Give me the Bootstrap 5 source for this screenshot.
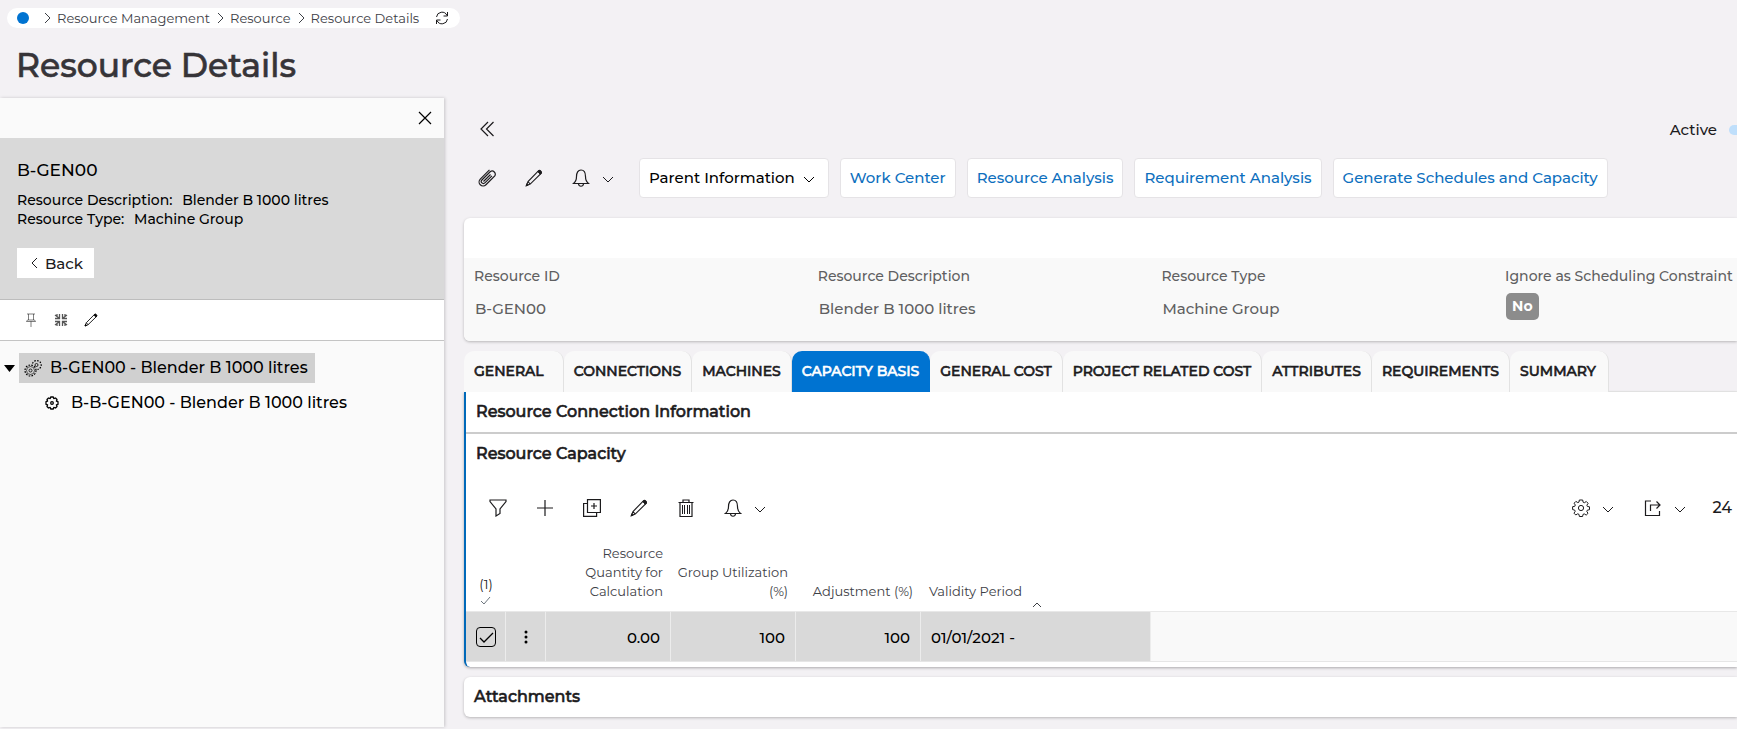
<!DOCTYPE html>
<html lang="en">
<head>
<meta charset="utf-8">
<meta name="viewport" content="width=device-width, initial-scale=1">
<title>Resource Details</title>
<link href="https://cdn.jsdelivr.net/npm/bootstrap@5.3.0/dist/css/bootstrap.min.css" rel="stylesheet">
<style>
body{font-family:Montserrat,Inter,"Open Sans",sans-serif;font-size:15px;font-weight:500;line-height:20px;color:#1c1b1d;background:#f3f1f4;min-height:100vh;overflow-x:hidden}
a{text-decoration:none}
button{font-weight:500}
svg{fill:none;stroke:currentColor;flex:none;display:block}
.ic{width:18px;height:18px}
.ic-sm{width:14px;height:14px}
.chev{width:12px;height:12px}
.iconbtn{border:0;background:none;padding:0;color:inherit;display:flex;align-items:center;justify-content:center}
.heavy{-webkit-text-stroke:.6px currentColor}
.crumbs{height:20px;margin:8px 0 0 7px;padding:0 11px 0 10px;border-radius:10px;font-size:13px;line-height:18px;font-weight:400;width:max-content}
.crumbs a{color:#3d4046}
.crumbs>a{height:19px}
.crumbs .chev{margin:0 4px;color:#3d4046}
.crumbs .dot{width:12px;height:12px;border-radius:50%;background:#0073d1}
.page-title{font-size:33px;line-height:40px;font-weight:500;color:#363438;margin:17px 0 13px 16px}
.side{width:444px;background:#fafafa;box-shadow:1px 0 3px rgba(0,0,0,.18);flex:none;color:#000}
.side-top{height:40px;padding-right:12px}
.side-info{background:#d9d9d9;border-bottom:1px solid #bdbdbd;padding:22px 17px 20px;height:162px}
.side-name{font-size:17px}
.side-desc{font-size:14px;line-height:19px;margin-top:11px}
.side-desc span{margin-left:6px}
.back{background:#fff;height:30px;padding:2px 11px 0 12px;margin-top:19px;color:#1c1b1d}
.side-tools{height:41px;border-bottom:1px solid #c4c4c4;background:#fff;padding-left:24px;gap:16px}
.tree{padding-top:12px;font-size:16px}
.tree-item{height:30px;color:#000}
.picked{background:#d0d0d0;padding:0 7px 0 5px}
.kid{margin:5px 0 0 45px}
.kid svg{stroke-width:2px}
.main{padding:20px 0 10px 20px;min-width:0}
.topbar{padding-left:14px;margin-bottom:18px}
.active-box{margin-right:-28px;padding-top:2px}
.sw{appearance:none;width:36px;height:10px;border-radius:5px;background:#bfdffb;margin:0 0 0 4px}
.tools{gap:11px}
.iconset{padding-left:14px;width:164px;gap:29px}
.act{height:40px;border:1px solid #e5e3e6;border-radius:4px;background:#fff;padding:0 9px;color:#0d6fbe}
.panel-w{background:#fff;border-radius:6px 0 0 6px;box-shadow:0 1px 3px rgba(0,0,0,.25)}
.idcard{margin-top:20px;padding-top:40px}
.fields{display:grid;grid-template-columns:repeat(4,27%);background:#f9f9f9;padding-top:8px;height:83px;overflow:hidden;white-space:nowrap;color:#5f5f61;border-radius:0 0 0 6px}
.fields div{padding-left:10px}
.fields .lab{font-size:14px;line-height:20px;margin-bottom:7px}
.fields dd{margin:0;padding-left:1px;line-height:31px;height:26px}
.flag{background:#8c8c8c;color:#fff;font-weight:700;border-radius:5px;padding:0 6px;height:27px;line-height:27px;display:inline-block;font-size:14px;vertical-align:top}
.tabs{margin-top:10px;border-bottom:1px solid #ebebeb;height:41px}
.tabs button{border:0;border-right:1px solid #e2e2e2;background:#f9f9f9;border-radius:10px 10px 0 0;padding:0 10px 2px;font-size:14px;color:#1c1b1d;height:41px;white-space:nowrap}
.tabs button.active{background:#0073d1;color:#fff;border-color:#0073d1}
.tabs button.first{padding-right:19px}
.tabs button.last{padding-right:12px}
.capacity{background:#fff;border-left:2px solid #0069b9;border-radius:0 0 0 6px;box-shadow:0 1px 3px rgba(0,0,0,.3)}
.sec{font-size:16px;line-height:40px;height:40px;font-weight:500;padding-left:10px;margin:0}
.sec-line{border-bottom:2px solid #ccc;height:42px}
.grid-tools{height:70px;padding:0 5px 2px 23px}
.gt{gap:29px}
.gr{gap:30px}
.gr span{margin-left:-4px;font-size:16px}
.grid{table-layout:fixed;width:685px;border-collapse:separate;border-spacing:0}
.grid th{font-weight:400;font-size:13px;line-height:19px;color:#3d4046;vertical-align:bottom;padding:0 8px 10px 0;height:67px;text-align:right}
.grid td{height:50px;background:#d9d9d9;border-right:1px solid #ececec;border-top:1px solid #e8e8e8;text-align:right;padding:2px 10px 0;color:#000;vertical-align:middle}
.grid .selcol{text-align:center;padding:0 0 4px;line-height:21px;color:#1c1b1d}
.grid .selcell{padding:0 10px}
.gridwrap{background:linear-gradient(#fff 67px,#e8e8e8 67px,#e8e8e8 68px,#f9f9f9 68px);border-bottom:1px solid #e6e6e6}
.tick{appearance:none;width:20px;height:20px;border:1px solid #000;border-radius:4px;margin:0;display:block;background:url("data:image/svg+xml,%3Csvg xmlns='http://www.w3.org/2000/svg' viewBox='0 0 18 18' fill='none' stroke='black' stroke-width='1.300'%3E%3Cpath d='M3 10l4 4 9-9'/%3E%3C/svg%3E") center/18px no-repeat}
.validity{padding-left:8px;gap:9px;height:29px;margin-bottom:-10px;align-items:flex-end}
.validity span{height:29px}
.foot{height:5px}
.att{margin-top:10px}
</style>
</head>
<body>
<svg width="0" height="0" class="position-absolute" aria-hidden="true">
<symbol id="right" viewBox="0 0 12 12"><path d="M4 1l5 5-5 5"/></symbol>
<symbol id="left" viewBox="0 0 12 12"><path d="M8 0L3 5l5 5"/></symbol>
<symbol id="down" viewBox="0 0 12 12"><path d="M1 5l5 5 5-5"/></symbol>
<symbol id="up" viewBox="0 0 12 12"><path d="M2 8l4-4 4 4"/></symbol>
<symbol id="refresh" viewBox="0 0 14 14"><path d="M1.500 6A5.500 5.500 0 0 1 12 4.500M12.500 1v4H8.500M12.500 8A5.500 5.500 0 0 1 2 9.500M1.500 13V9h4"/></symbol>
<symbol id="close" viewBox="0 0 14 14"><path stroke-width="1.200" d="M1 1l12 12M13 1L1 13"/></symbol>
<symbol id="dbl" viewBox="0 0 18 18"><path stroke-width="1.200" d="M10 2L3 9l7 7M15.500 2l-7 7 7 7"/></symbol>
<symbol id="pin" viewBox="0 0 14 14"><path d="M3 1h8M4.500 1v6M9.500 1v6M2.500 8.500c0-1 1-1.500 2-1.500h5c1 0 2 .5 2 1.500zM7 8.500V14"/></symbol>
<symbol id="collapse" viewBox="0 0 14 14"><path stroke="#555" stroke-width="1.300" d="M1 2l4 3M13 2L9 5M1 12l4-3M13 12L9 9M1 5.500h4.500V1M8.500 1v4.500H13M1 8.500h4.500V13M8.500 13V8.500H13M3 1v2M11 1v2M3 11v2M11 11v2"/></symbol>
<symbol id="pencil" viewBox="0 0 18 18"><path stroke-width="1.100" d="M1.300 16.700l1.700-4.200L13.400 1.900c1.500-1.300 3.800.8 2.700 2.600L5.200 15.100zM3 12.500l2.200 2.600"/><path fill="currentColor" d="M13.400 1.900c1.500-1.300 3.800.8 2.700 2.600l-.8.800-2.500-2.700zM1.300 16.700l.7-2 1.300 1.300z"/></symbol>
<symbol id="bell" viewBox="0 0 18 18"><path stroke-width="1.200" d="M1.500 14.500c2-1.500 3-3.500 3-7C4.500 4 6 1 9 1s4.500 3 4.500 6.500c0 3.500 1 5.500 3 7zM6.500 15c.5 3 4.500 3 5 0"/></symbol>
<symbol id="clip" viewBox="0 0 18 18"><g transform="rotate(45 9 9)"><path stroke-width="1.200" d="M5 4v10.500a4 4 0 0 0 8 0V2a3.200 3.200 0 0 0-6.200 0v12a2.100 2.100 0 0 0 4.200 0V4M5 4V1.500M9 4v10"/></g></symbol>
<symbol id="filter" viewBox="0 0 18 18"><path stroke-width="1.200" d="M1 1h16v1.500L11 10v4.500L7 17v-7L1 2.500z"/></symbol>
<symbol id="plus" viewBox="0 0 18 18"><path stroke-width="1.200" d="M9 1v16M1 9h16"/></symbol>
<symbol id="copy" viewBox="0 0 18 18"><path stroke-width="1.200" d="M4.500.6h12.900v12.900H4.500zM4.500 4.500H.600v12.900h13v-4M11 4v6M8 7h6"/></symbol>
<symbol id="trash" viewBox="0 0 18 18"><path stroke-width="1.200" d="M1.500 3.500h15M6 3.500V1h6v2.500M3 3.500v14h12v-14"/><path d="M5.500 6v9M7.500 6v9M10.500 6v9M12.500 6v9"/></symbol>
<symbol id="gear" viewBox="0 0 18 18"><circle cx="9" cy="9" r="2.600"/><path d="M7.300 1h3.400l.4 2.200 1.300.5 1.900-1.200 1.800 1.800-1.200 1.900.5 1.300 2.100.3v2.900l-2.200.5-.5 1.200 1.200 1.900-1.800 1.800-1.900-1.200-1.300.5-.4 2.100H7.400L7 15.400l-1.300-.6-1.900 1.200L2 14.200l1.200-1.900-.5-1.200L.6 10.600V7.700l2.200-.4.500-1.300L2.100 4.200l1.800-1.800 1.900 1.200 1.200-.5z"/></symbol>
<symbol id="cog" viewBox="0 0 14 14"><circle cx="7" cy="7" r="1.300" stroke-width="1.300"/><path stroke-width="1.300" stroke-linejoin="round" d="M5.700 1h2.600l.5 1.600 1.700-.6 1.500 1.500-.6 1.700 1.600.5v2.600l-1.600.5.6 1.700-1.500 1.500-1.700-.6-.5 1.600H5.700l-.5-1.600-1.700.6L2 10.500l.6-1.700L1 8.300V5.700l1.600-.5L2 3.500 3.500 2l1.700.6z"/></symbol>
<symbol id="share" viewBox="0 0 18 18"><path stroke-width="1.200" d="M7 2H1.500v14.500h14V12M6.500 12V6H16M12.500 2.500L16 6l-3.500 3.500"/></symbol>
<symbol id="gears" viewBox="0 0 18 18"><g stroke-dasharray="1.600 1.300"><circle cx="6.500" cy="11.500" r="5.500" stroke-width="1.200"/><path stroke-width="1.200" d="M8.500 4.500A4.500 4.500 0 1 1 13.500 10.500"/></g><circle cx="6.500" cy="11.500" r="4" stroke-width=".6"/><circle cx="6.500" cy="11.500" r="1.500" stroke-width=".8"/><circle cx="12.500" cy="6" r="1.500" stroke-width=".8"/></symbol>
</svg>

<header>
<nav class="crumbs bg-white d-flex align-items-center" aria-label="Breadcrumb">
<a href="#" class="dot me-2" aria-label="Home"></a>
<svg class="chev"><use href="#right"/></svg><a href="#">Resource Management</a>
<svg class="chev"><use href="#right"/></svg><a href="#">Resource</a>
<svg class="chev"><use href="#right"/></svg><a href="#">Resource Details</a>
<button class="iconbtn ms-3" aria-label="Refresh"><svg class="ic-sm"><use href="#refresh"/></svg></button>
</nav>
<h1 class="page-title heavy">Resource Details</h1>
</header>

<div class="d-flex align-items-stretch">
<aside class="side">
<div class="side-top d-flex align-items-center justify-content-end"><button class="iconbtn" aria-label="Close"><svg class="ic-sm"><use href="#close"/></svg></button></div>
<div class="side-info">
<div class="side-name">B-GEN00</div>
<div class="side-desc"><div>Resource Description:<span> Blender B 1000 litres</span></div><div>Resource Type:<span> Machine Group</span></div></div>
<button class="iconbtn back"><svg class="chev me-1"><use href="#left"/></svg>Back</button>
</div>
<div class="side-tools d-flex align-items-center">
<button class="iconbtn text-black-50" aria-label="Pin"><svg class="ic-sm"><use href="#pin"/></svg></button>
<button class="iconbtn" aria-label="Collapse"><svg class="ic-sm"><use href="#collapse"/></svg></button>
<button class="iconbtn" aria-label="Edit"><svg class="ic-sm"><use href="#pencil"/></svg></button>
</div>
<div class="tree">
<div class="d-flex align-items-center">
<button class="iconbtn mx-1" aria-label="Toggle"><svg width="11" height="7"><path d="M0 0h11L5.500 7z" fill="#000" stroke="none"/></svg></button>
<a href="#" class="tree-item picked d-flex align-items-center"><svg class="ic"><use href="#gears"/></svg><span class="ps-2">B-GEN00 - Blender B 1000 litres</span></a>
</div>
<a href="#" class="tree-item kid d-flex align-items-center"><svg class="ic-sm"><use href="#cog"/></svg><span class="ps-2 ms-1">B-B-GEN00 - Blender B 1000 litres</span></a>
</div>
</aside>

<main class="main flex-grow-1">
<div class="topbar d-flex align-items-center justify-content-between overflow-hidden">
<button class="iconbtn" aria-label="Collapse panel"><svg class="ic"><use href="#dbl"/></svg></button>
<div class="d-flex align-items-center gap-2 active-box"><label for="act">Active</label><input id="act" type="checkbox" role="switch" class="sw"></div>
</div>
<div class="tools d-flex align-items-center">
<div class="d-flex align-items-center iconset">
<button class="iconbtn" aria-label="Attach"><svg class="ic"><use href="#clip"/></svg></button>
<button class="iconbtn" aria-label="Edit"><svg class="ic"><use href="#pencil"/></svg></button>
<button class="iconbtn" aria-label="Notify"><svg class="ic me-2"><use href="#bell"/></svg><svg class="chev ms-1"><use href="#down"/></svg></button>
</div>
<button class="act d-flex align-items-center text-black">Parent Information<svg class="chev ms-2 me-1"><use href="#down"/></svg></button>
<button class="act">Work Center</button>
<button class="act">Resource Analysis</button>
<button class="act">Requirement Analysis</button>
<button class="act">Generate Schedules and Capacity</button>
</div>

<section class="panel-w idcard">
<dl class="fields mb-0">
<div><dt class="lab fw-medium">Resource ID</dt><dd>B-GEN00</dd></div>
<div><dt class="lab fw-medium">Resource Description</dt><dd>Blender B 1000 litres</dd></div>
<div><dt class="lab fw-medium">Resource Type</dt><dd>Machine Group</dd></div>
<div><dt class="lab fw-medium">Ignore as Scheduling Constraint</dt><dd><span class="flag">No</span></dd></div>
</dl>
</section>

<div class="tabs d-flex heavy" role="tablist">
<button role="tab" class="first">GENERAL</button><button role="tab">CONNECTIONS</button><button role="tab">MACHINES</button><button role="tab" class="active" aria-selected="true">CAPACITY BASIS</button><button role="tab">GENERAL COST</button><button role="tab">PROJECT RELATED COST</button><button role="tab">ATTRIBUTES</button><button role="tab">REQUIREMENTS</button><button role="tab" class="last">SUMMARY</button>
</div>
<section class="capacity">
<h2 class="sec sec-line heavy">Resource Connection Information</h2>
<h2 class="sec heavy">Resource Capacity</h2>
<div class="grid-tools d-flex align-items-center justify-content-between">
<div class="d-flex align-items-center gt">
<button class="iconbtn" aria-label="Filter"><svg class="ic"><use href="#filter"/></svg></button>
<button class="iconbtn" aria-label="Add"><svg class="ic"><use href="#plus"/></svg></button>
<button class="iconbtn" aria-label="Duplicate"><svg class="ic"><use href="#copy"/></svg></button>
<button class="iconbtn" aria-label="Edit"><svg class="ic"><use href="#pencil"/></svg></button>
<button class="iconbtn" aria-label="Delete"><svg class="ic"><use href="#trash"/></svg></button>
<button class="iconbtn" aria-label="Notify"><svg class="ic me-2"><use href="#bell"/></svg><svg class="chev ms-1"><use href="#down"/></svg></button>
</div>
<div class="d-flex align-items-center gr">
<button class="iconbtn" aria-label="Settings"><svg class="ic me-2"><use href="#gear"/></svg><svg class="chev ms-1"><use href="#down"/></svg></button>
<button class="iconbtn" aria-label="Export"><svg class="ic me-2"><use href="#share"/></svg><svg class="chev ms-1"><use href="#down"/></svg></button>
<span>24</span>
</div>
</div>
<div class="gridwrap">
<table class="grid">
<colgroup><col style="width:40px"><col style="width:40px"><col style="width:125px"><col style="width:125px"><col style="width:125px"><col></colgroup>
<thead><tr><th class="selcol">(1)<svg class="chev mx-auto text-secondary"><path d="M1 6l3 3 6-7"/></svg></th><th></th><th>Resource Quantity for Calculation</th><th>Group Utilization (%)</th><th>Adjustment (%)</th><th><div class="d-flex validity"><span>Validity Period</span><svg class="chev"><use href="#up"/></svg></div></th></tr></thead>
<tbody><tr><td class="selcell"><input type="checkbox" class="tick" checked aria-label="Select row"></td><td class="selcell"><button class="iconbtn mx-auto" aria-label="Row menu"><svg width="4" height="14"><g fill="#000" stroke="none"><circle cx="2" cy="2" r="1.500"/><circle cx="2" cy="7" r="1.500"/><circle cx="2" cy="12" r="1.500"/></g></svg></button></td><td>0.00</td><td>100</td><td>100</td><td class="text-start">01/01/2021 -</td></tr></tbody>
</table>
</div>
<div class="foot"></div>
</section>
<section class="panel-w att"><h2 class="sec heavy">Attachments</h2></section>
</main>
</div>
<script src="https://cdn.jsdelivr.net/npm/bootstrap@5.3.0/dist/js/bootstrap.bundle.min.js"></script>
</body>
</html>
